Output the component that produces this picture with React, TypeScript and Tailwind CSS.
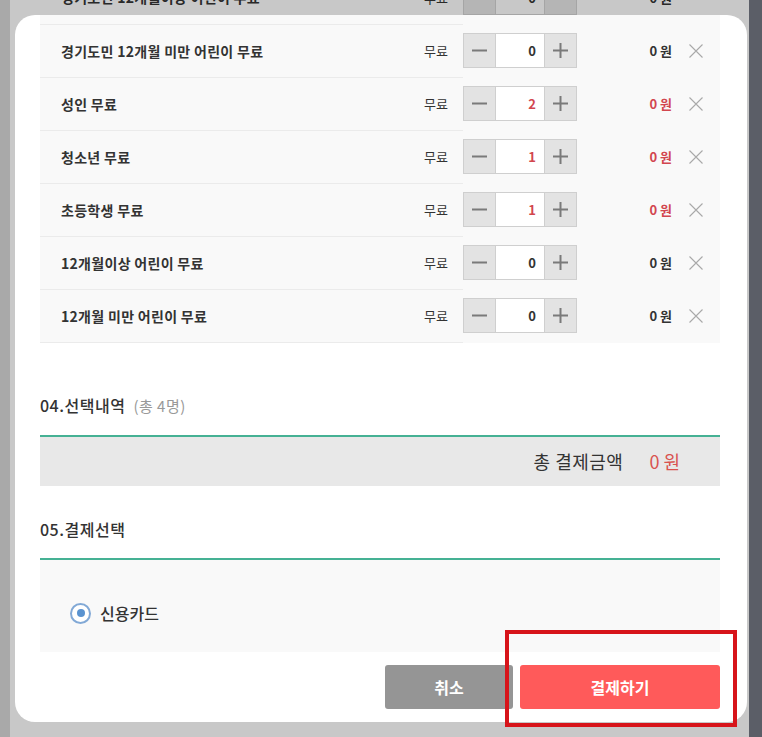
type Ticket = {
  name: string;
  count: number;
};

const tickets: Ticket[] = [
  { name: '경기도민 12개월 미만 어린이 무료', count: 0 },
  { name: '성인 무료', count: 2 },
  { name: '청소년 무료', count: 1 },
  { name: '초등학생 무료', count: 1 },
  { name: '12개월이상 어린이 무료', count: 0 },
  { name: '12개월 미만 어린이 무료', count: 0 },
];

const font = { fontFamily: '"Noto Sans CJK KR", "Noto Sans", sans-serif' };

function MinusIcon({ color }: { color: string }) {
  return (
    <svg width="15" height="15" viewBox="0 0 15 15">
      <rect x="0" y="6.5" width="15" height="2" fill={color} />
    </svg>
  );
}

function PlusIcon({ color }: { color: string }) {
  return (
    <svg width="15" height="15" viewBox="0 0 15 15">
      <rect x="0" y="6.5" width="15" height="2" fill={color} />
      <rect x="6.5" y="0" width="2" height="15" fill={color} />
    </svg>
  );
}

function CloseIcon() {
  return (
    <svg width="14" height="14" viewBox="0 0 14 14" className="ml-[17px]">
      <path d="M0.5 0.5 L13.5 13.5 M13.5 0.5 L0.5 13.5" stroke="#a9a9a9" strokeWidth="1.1" fill="none" />
    </svg>
  );
}

function TicketRow({ ticket }: { ticket: Ticket }) {
  const active = ticket.count > 0;
  return (
    <div className="flex h-[53px] items-stretch">
      <div className="flex w-[423px] items-center border-t border-[#ebebeb] pl-[21px] pr-[15px]">
        <span className="flex-1 text-[14px] font-bold tracking-[0.3px] text-[#333]">{ticket.name}</span>
        <span className="text-[13px] text-[#333]">무료</span>
      </div>
      <div className="flex flex-1 items-center">
        <div className="flex h-[35px] w-[114px] border border-[#cfcfcf]">
          <button className="flex w-[31px] items-center justify-center bg-[#e3e3e3]">
            <MinusIcon color="#7a7a7a" />
          </button>
          <div
            className={`flex w-[50px] items-center justify-end border-x border-[#cfcfcf] bg-white pr-[8px] text-[13px] font-bold ${
              active ? 'text-[#d2464f]' : 'text-[#333]'
            }`}
          >
            {ticket.count}
          </div>
          <button className="flex flex-1 items-center justify-center bg-[#e3e3e3]">
            <PlusIcon color="#7a7a7a" />
          </button>
        </div>
        <span
          className={`w-[95px] text-right text-[13px] font-bold ${active ? 'text-[#d2464f]' : 'text-[#333]'}`}
        >
          0 원
        </span>
        <CloseIcon />
      </div>
    </div>
  );
}

export default function App() {
  return (
    <div className="relative flex h-[737px] w-[762px] overflow-hidden bg-[#c8c8c8]" style={font}>
      {/* dimmed page behind the modal */}
      <div className="w-[10px] bg-[#a9a9a9]" />
      <div className="flex-1">
        <div className="-mt-[29px] ml-[30px] flex h-[53px] w-[680px] items-center">
          <div className="flex w-[423px] items-center pl-[21px] pr-[15px]">
            <span className="flex-1 text-[14px] font-bold tracking-[0.3px] text-[#292929]">
              경기도민 12개월이상 어린이 무료
            </span>
            <span className="text-[13px] text-[#292929]">무료</span>
          </div>
          <div className="flex h-[35px] w-[114px] border border-[#a5a5a5]">
            <div className="w-[31px] bg-[#b5b5b5]" />
            <div className="flex w-[50px] items-center justify-end border-x border-[#a5a5a5] bg-[#c8c8c8] pr-[8px] text-[13px] font-bold text-[#292929]">
              0
            </div>
            <div className="flex-1 bg-[#b5b5b5]" />
          </div>
          <span className="w-[95px] text-right text-[13px] font-bold text-[#292929]">0 원</span>
        </div>
      </div>
      <div className="w-[13px] bg-[#5b5e67]" />

      {/* modal */}
      <div className="absolute left-[15px] top-[15px] flex h-[707px] w-[732px] flex-col overflow-hidden rounded-[20px] bg-white pl-[25px] pr-[27px]">
        <div className="bg-[#f9f9f9]">
          <div className="h-[9px]" />
          {tickets.map((t) => (
            <TicketRow key={t.name} ticket={t} />
          ))}
          <div className="w-[423px] border-t border-[#ebebeb]" />
        </div>

        <div className="pt-[52px] pb-[19px] leading-[20px]">
          <span className="text-[16px] font-medium tracking-[0.5px] text-[#333]">04.선택내역</span>
          <span className="ml-[8px] text-[15px] tracking-[0.5px] text-[#999]">(총 4명)</span>
        </div>
        <div className="h-[2px] bg-[#45b194]" />
        <div className="flex h-[49px] items-center justify-end bg-[#e8e8e8] pr-[40px]">
          <span className="text-[18px] tracking-[0.5px] text-[#333]">총 결제금액</span>
          <span className="ml-[26px] text-[18px] text-[#d9534f]">0 원</span>
        </div>

        <div className="pt-[33px] pb-[19px] leading-[20px]">
          <span className="text-[16px] font-medium tracking-[0.5px] text-[#333]">05.결제선택</span>
        </div>
        <div className="h-[2px] bg-[#45b194]" />
        <div className="h-[92px] bg-[#f9f9f9] pl-[30px] pt-[41px]">
          <label className="flex items-center">
            <span className="flex h-[21px] w-[21px] items-center justify-center rounded-full border-2 border-[#82a9d6] bg-white">
              <span className="h-[8px] w-[8px] rounded-full bg-[#5a93d0]" />
            </span>
            <span className="ml-[9px] text-[16px] font-medium text-[#333]">신용카드</span>
          </label>
        </div>

        <div className="mt-[13px] flex justify-end gap-[7px]">
          <button className="h-[44px] w-[128px] rounded-[3px] bg-[#959595] text-[16px] font-bold text-white">
            취소
          </button>
          <button className="h-[44px] w-[200px] rounded-[3px] bg-[#ff5a5a] text-[16px] font-bold text-white">
            결제하기
          </button>
        </div>
      </div>

      {/* highlight annotation */}
      <div className="absolute left-[505px] top-[630px] h-[97px] w-[232px] border-[4px] border-[#d7141a]" />
    </div>
  );
}
